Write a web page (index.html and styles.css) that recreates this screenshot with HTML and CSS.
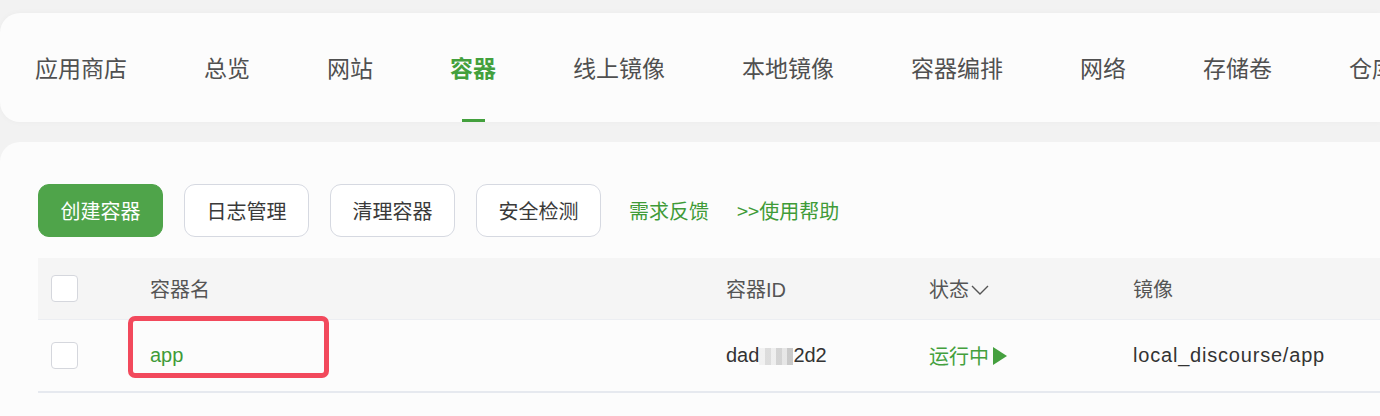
FILE: index.html
```html
<!DOCTYPE html>
<html lang="zh-CN">
<head>
<meta charset="utf-8">
<title>容器</title>
<link rel="stylesheet" href="styles.css">
</head>
<body>
<div class="page">
  <nav class="tabs">
    <a class="tab">应用商店</a>
    <a class="tab">总览</a>
    <a class="tab">网站</a>
    <a class="tab active">容器</a>
    <a class="tab">线上镜像</a>
    <a class="tab">本地镜像</a>
    <a class="tab">容器编排</a>
    <a class="tab">网络</a>
    <a class="tab">存储卷</a>
    <a class="tab">仓库</a>
  </nav>

  <section class="panel">
    <div class="toolbar">
      <button class="btn primary">创建容器</button>
      <button class="btn">日志管理</button>
      <button class="btn">清理容器</button>
      <button class="btn">安全检测</button>
      <a class="link first">需求反馈</a>
      <a class="link second">&gt;&gt;使用帮助</a>
    </div>

    <div class="table">
      <div class="row head">
        <div class="cell check"><span class="box"></span></div>
        <div class="cell">容器名</div>
        <div class="cell">容器ID</div>
        <div class="cell">状态<svg class="chev" width="20" height="12" viewBox="0 0 20 12"><polyline points="2,2 10,10 18,2" fill="none" stroke="#555" stroke-width="1.4"/></svg></div>
        <div class="cell">镜像</div>
      </div>
      <div class="row body">
        <div class="cell check"><span class="box"></span></div>
        <div class="cell name">app</div>
        <div class="cell id">dad<span class="blur"></span>2d2</div>
        <div class="cell status">运行中<svg class="play" width="16" height="18" viewBox="0 0 16 18"><polygon points="1,0 15,9 1,18" fill="#45a03f"/></svg></div>
        <div class="cell image">local_discourse/app</div>
        <span class="highlight"></span>
      </div>
    </div>

    <div class="pager">
      <span class="pg grey"></span>
      <span class="pg green"></span>
    </div>
  </section>
</div>
</body>
</html>
```
FILE: styles.css
```css
html, body {
  margin: 0;
  padding: 0;
}
body {
  background: #f2f2f2;
  font-family: "Liberation Sans", "Noto Sans CJK SC", sans-serif;
  overflow: hidden;
  width: 1380px;
  height: 416px;
}
.page {
  padding-top: 13px;
  height: 416px;
  box-sizing: border-box;
  overflow: hidden;
}
.tabs {
  display: flex;
  gap: 77px;
  align-items: stretch;
  height: 109px;
  width: 1380px;
  box-sizing: border-box;
  padding-left: 35px;
  background: #fcfcfc;
  border-radius: 20px 0 0 20px;
  box-shadow: 0 0 6px rgba(0,0,0,0.03);
  overflow: hidden;
}
.tab {
  position: relative;
  display: flex;
  align-items: center;
  font-family: "Noto Sans CJK SC", sans-serif;
  font-size: 23px;
  color: #505050;
  white-space: nowrap;
  padding-bottom: 2px;
  flex-shrink: 0;
}
.tab.active {
  color: #43a03d;
  font-weight: 700;
}
.tab.active::after {
  content: "";
  position: absolute;
  left: 12px;
  width: 23px;
  bottom: 0;
  height: 3px;
  background: #43a03d;
}
.panel {
  margin-top: 20px;
  width: 1380px;
  height: 274px;
  box-sizing: border-box;
  background: #fcfcfc;
  border-radius: 20px 0 0 0;
  padding: 42px 0 0 38px;
  overflow: hidden;
}
.toolbar {
  display: flex;
  align-items: center;
  gap: 21px;
  height: 53px;
}
.btn {
  width: 125px;
  height: 53px;
  border: 1px solid #d6d9e1;
  background: #fff;
  border-radius: 11px;
  font-family: "Noto Sans CJK SC", sans-serif;
  font-size: 20px;
  color: #3a3a3a;
  padding: 0;
}
.btn.primary {
  background: #4fa44a;
  border-color: #4fa44a;
  color: #fff;
}
.link {
  font-family: "Noto Sans CJK SC", sans-serif;
  font-size: 20px;
  color: #3f9b38;
  white-space: nowrap;
}
.link.first {
  margin-left: 7px;
}
.link.second {
  margin-left: 7px;
}
.table {
  margin-top: 21px;
}
.row {
  position: relative;
  display: grid;
  grid-template-columns: 112px 576px 203px 204px 1fr;
  align-items: center;
}
.row.head {
  height: 61px;
  background: #f5f5f5;
  border-bottom: 1px solid #eceef2;
  color: #555;
  font-size: 20px;
}
.row.body {
  height: 71px;
  border-bottom: 2px solid #e6e9ef;
  color: #333;
  font-size: 20px;
}
.cell {
  display: flex;
  align-items: center;
  white-space: nowrap;
}
.cell.check {
  padding-left: 13px;
}
.box {
  display: block;
  width: 25px;
  height: 25px;
  border: 1px solid #d5d7dd;
  border-radius: 4px;
  background: #fff;
}
.chev {
  margin-left: 1px;
  margin-top: 2px;
}
.name {
  color: #3f9b38;
}
.id {
  color: #333;
}
.image {
  letter-spacing: 0.8px;
}
.blur {
  display: inline-block;
  width: 34px;
  height: 17px;
  margin-top: 2px;
  background:
    linear-gradient(90deg, #f0f0f0 0 6px, #d9d9d9 6px 12px, #ededed 12px 17px, #cfcfcf 17px 23px, #e4e4e4 23px 28px, #c4c4c4 28px 34px);
  opacity: 0.9;
}
.status {
  color: #43a03d;
  font-family: "Noto Sans CJK SC", sans-serif;
}
.play {
  margin-left: 3px;
}
.highlight {
  position: absolute;
  left: 90px;
  top: -4px;
  width: 201px;
  height: 62px;
  box-sizing: border-box;
  border: 5px solid #f2495c;
  border-radius: 7px;
}
.pager {
  display: flex;
  gap: 20px;
  margin-top: 23px;
  padding-left: 38px;
}
.pg {
  display: block;
  height: 30px;
  border-radius: 6px;
}
.pg.grey {
  width: 177px;
  border: 1px solid #d8d8d8;
}
.pg.green {
  width: 80px;
  background: #a6cf9f;
}
```
